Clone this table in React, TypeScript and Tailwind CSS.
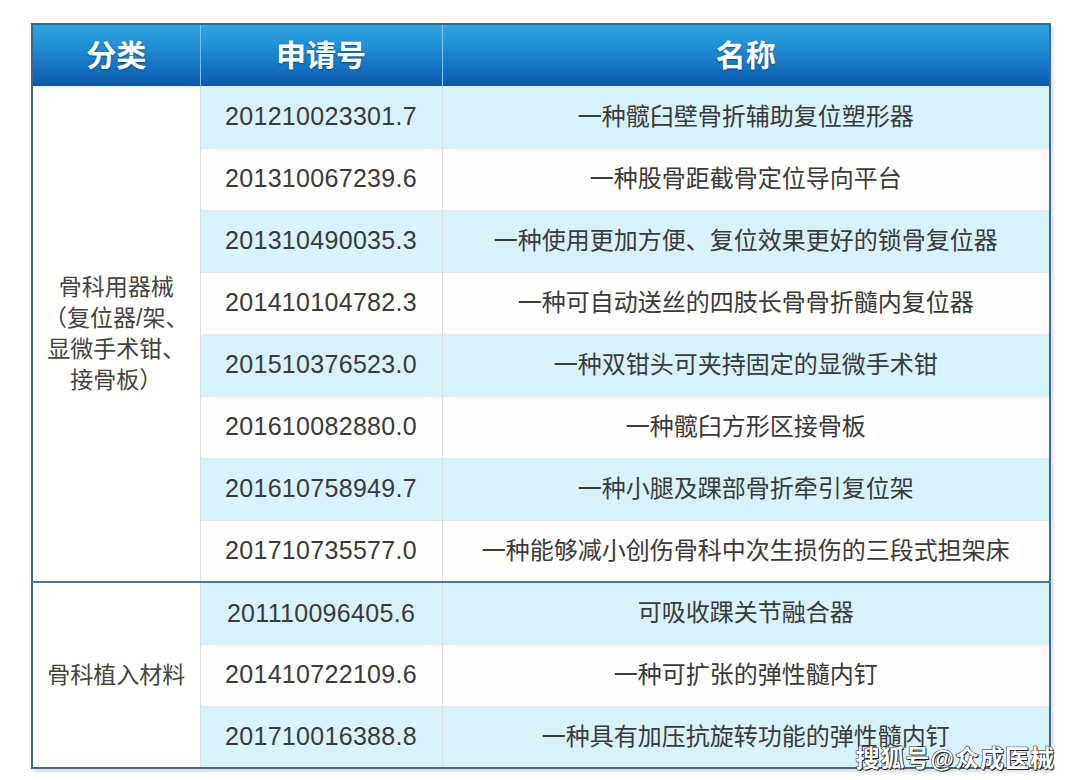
import React from "react";

type Row = { no: string; name: string };

const groups: { cat: React.ReactNode; rows: Row[] }[] = [
    {
        cat: (
            <>
                骨科用器械
                <br />
                （复位器/架、
                <br />
                显微手术钳、
                <br />
                接骨板）
            </>
        ),
        rows: [
            { no: "201210023301.7", name: "一种髋臼壁骨折辅助复位塑形器" },
            { no: "201310067239.6", name: "一种股骨距截骨定位导向平台" },
            { no: "201310490035.3", name: "一种使用更加方便、复位效果更好的锁骨复位器" },
            { no: "201410104782.3", name: "一种可自动送丝的四肢长骨骨折髓内复位器" },
            { no: "201510376523.0", name: "一种双钳头可夹持固定的显微手术钳" },
            { no: "201610082880.0", name: "一种髋臼方形区接骨板" },
            { no: "201610758949.7", name: "一种小腿及踝部骨折牵引复位架" },
            { no: "201710735577.0", name: "一种能够减小创伤骨科中次生损伤的三段式担架床" },
        ],
    },
    {
        cat: "骨科植入材料",
        rows: [
            { no: "201110096405.6", name: "可吸收踝关节融合器" },
            { no: "201410722109.6", name: "一种可扩张的弹性髓内钉" },
            { no: "201710016388.8", name: "一种具有加压抗旋转功能的弹性髓内钉" },
        ],
    },
];

const font = "font-['Liberation_Sans','Noto_Sans_CJK_SC',sans-serif]";

export default function App() {
    return (
        <div className={`relative h-[780px] w-[1080px] overflow-hidden bg-white ${font}`}>
            <div className="pl-[31px] pt-[23px]">
                <table className="w-[1018px] table-fixed border-collapse border-2 border-[#3d6a8a] shadow-[2px_3px_4px_rgba(0,0,0,0.15)]">
                    <colgroup>
                        <col className="w-[168px]" />
                        <col className="w-[242px]" />
                        <col className="w-[608px]" />
                    </colgroup>
                    <thead>
                        <tr className="h-[62px] bg-[linear-gradient(180deg,#2ea6e1_0%,#2290d6_35%,#1572c2_70%,#0d58ab_100%)] text-[30px] font-bold text-white [text-shadow:0_1px_2px_rgba(0,40,90,0.6)]">
                            <th className="border-r border-[#7cc2ea]">分类</th>
                            <th className="border-r border-[#7cc2ea]">申请号</th>
                            <th>名称</th>
                        </tr>
                    </thead>
                    <tbody>
                        {groups.map((g, gi) =>
                            g.rows.map((r, ri) => {
                                const shaded = ri % 2 === 0;
                                const top = ri === 0 && gi > 0 ? "border-t-2 border-t-[#4d7896]" : "border-t border-t-[#e3e6e8]";
                                return (
                                    <tr key={r.no} className={`h-[62px] text-[24px] text-[#3a3a3a] ${top}`}>
                                        {ri === 0 && (
                                            <td
                                                rowSpan={g.rows.length}
                                                className="border-r border-[#dcdfe2] bg-[#fffffd] text-center align-middle text-[23px] leading-[31px] text-[#444]"
                                            >
                                                {g.cat}
                                            </td>
                                        )}
                                        <td
                                            className={`border-r border-[#dcdfe2] text-center text-[25px] tracking-[0.3px] ${
                                                shaded ? "bg-[#d8f2fa]" : "bg-[#fefefd]"
                                            }`}
                                        >
                                            {r.no}
                                        </td>
                                        <td className={`text-center ${shaded ? "bg-[#d8f2fa]" : "bg-[#fefefd]"}`}>{r.name}</td>
                                    </tr>
                                );
                            })
                        )}
                    </tbody>
                </table>
            </div>
            <div className="absolute right-[25px] top-[741px] text-[24px] font-bold tracking-[1px] text-white [-webkit-text-stroke:1px_#222] [paint-order:stroke_fill] [text-shadow:1px_1px_0_#222]">
                搜狐号@众成医械
            </div>
        </div>
    );
}
